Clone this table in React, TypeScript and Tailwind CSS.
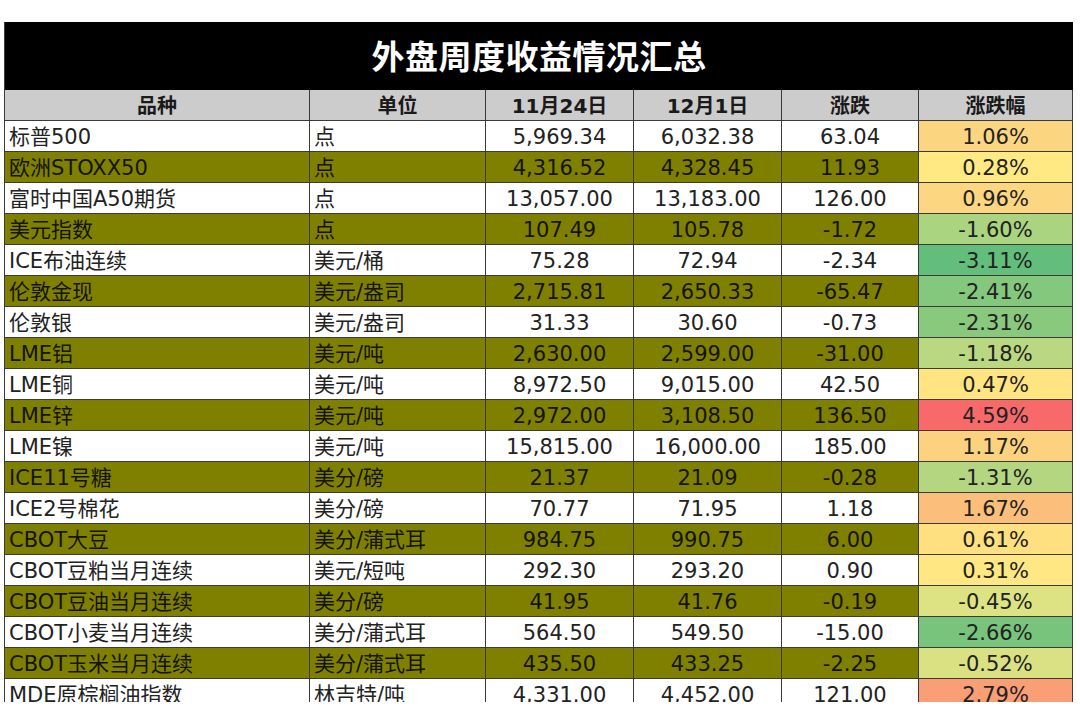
import React from 'react';

interface Row {
    name: string;
    unit: string;
    prev: string;
    curr: string;
    change: string;
    pct: string;
    pctBg: string;
}

const rows: Row[] = [
    { name: '标普500', unit: '点', prev: '5,969.34', curr: '6,032.38', change: '63.04', pct: '1.06%', pctBg: 'bg-[#fcd580]' },
    { name: '欧洲STOXX50', unit: '点', prev: '4,316.52', curr: '4,328.45', change: '11.93', pct: '0.28%', pctBg: 'bg-[#fee983]' },
    { name: '富时中国A50期货', unit: '点', prev: '13,057.00', curr: '13,183.00', change: '126.00', pct: '0.96%', pctBg: 'bg-[#fcd680]' },
    { name: '美元指数', unit: '点', prev: '107.49', curr: '105.78', change: '-1.72', pct: '-1.60%', pctBg: 'bg-[#aad480]' },
    { name: 'ICE布油连续', unit: '美元/桶', prev: '75.28', curr: '72.94', change: '-2.34', pct: '-3.11%', pctBg: 'bg-[#63be7b]' },
    { name: '伦敦金现', unit: '美元/盎司', prev: '2,715.81', curr: '2,650.33', change: '-65.47', pct: '-2.41%', pctBg: 'bg-[#84c87e]' },
    { name: '伦敦银', unit: '美元/盎司', prev: '31.33', curr: '30.60', change: '-0.73', pct: '-2.31%', pctBg: 'bg-[#88c97e]' },
    { name: 'LME铝', unit: '美元/吨', prev: '2,630.00', curr: '2,599.00', change: '-31.00', pct: '-1.18%', pctBg: 'bg-[#bad881]' },
    { name: 'LME铜', unit: '美元/吨', prev: '8,972.50', curr: '9,015.00', change: '42.50', pct: '0.47%', pctBg: 'bg-[#fee582]' },
    { name: 'LME锌', unit: '美元/吨', prev: '2,972.00', curr: '3,108.50', change: '136.50', pct: '4.59%', pctBg: 'bg-[#f8696b]' },
    { name: 'LME镍', unit: '美元/吨', prev: '15,815.00', curr: '16,000.00', change: '185.00', pct: '1.17%', pctBg: 'bg-[#fcd27f]' },
    { name: 'ICE11号糖', unit: '美分/磅', prev: '21.37', curr: '21.09', change: '-0.28', pct: '-1.31%', pctBg: 'bg-[#b5d680]' },
    { name: 'ICE2号棉花', unit: '美分/磅', prev: '70.77', curr: '71.95', change: '1.18', pct: '1.67%', pctBg: 'bg-[#fbbf7b]' },
    { name: 'CBOT大豆', unit: '美分/蒲式耳', prev: '984.75', curr: '990.75', change: '6.00', pct: '0.61%', pctBg: 'bg-[#fee081]' },
    { name: 'CBOT豆粕当月连续', unit: '美元/短吨', prev: '292.30', curr: '293.20', change: '0.90', pct: '0.31%', pctBg: 'bg-[#ffe884]' },
    { name: 'CBOT豆油当月连续', unit: '美分/磅', prev: '41.95', curr: '41.76', change: '-0.19', pct: '-0.45%', pctBg: 'bg-[#dde283]' },
    { name: 'CBOT小麦当月连续', unit: '美分/蒲式耳', prev: '564.50', curr: '549.50', change: '-15.00', pct: '-2.66%', pctBg: 'bg-[#78c47d]' },
    { name: 'CBOT玉米当月连续', unit: '美分/蒲式耳', prev: '435.50', curr: '433.25', change: '-2.25', pct: '-0.52%', pctBg: 'bg-[#dae183]' },
    { name: 'MDE原棕榈油指数', unit: '林吉特/吨', prev: '4,331.00', curr: '4,452.00', change: '121.00', pct: '2.79%', pctBg: 'bg-[#f99e75]' },
];

const headers = ['品种', '单位', '11月24日', '12月1日', '涨跌', '涨跌幅'];

const gridCols = 'grid grid-cols-[305px_176px_148px_148px_137px_154px]';
const cellBase = 'h-[31px] flex items-center border-r border-b border-[#3a3a3a] overflow-hidden whitespace-nowrap';

export default function App() {
    return (
        <div className="w-[1080px] h-[720px] bg-white font-['DejaVu_Sans','Noto_Sans_CJK_SC',sans-serif]">
            <div className="pt-[22px] pl-[4px]">
                <div className="w-[1069px] h-[680px] overflow-hidden border-l border-[#3a3a3a]">
                    <div className="h-[68px] bg-black flex items-center justify-center">
                        <span className="text-white text-[33px] font-bold font-['Noto_Sans_CJK_SC',sans-serif] tracking-[0.5px]">
                            外盘周度收益情况汇总
                        </span>
                    </div>

                    <div className={gridCols}>
                        {headers.map((h) => (
                            <div key={h} className={`${cellBase} justify-center bg-[#cccccc] text-[20px] font-bold text-[#1a1a1a] pt-[2px]`}>
                                {h}
                            </div>
                        ))}
                    </div>

                    {rows.map((r, i) => {
                        const olive = i % 2 === 1;
                        const rowBg = olive ? 'bg-[#808000] text-[#141400]' : 'bg-white text-[#222222]';
                        return (
                            <div key={r.name} className={`${gridCols} text-[21px]`}>
                                <div className={`${cellBase} ${rowBg} pl-[4px] pt-[3px]`}>{r.name}</div>
                                <div className={`${cellBase} ${rowBg} pl-[4px] pt-[3px]`}>{r.unit}</div>
                                <div className={`${cellBase} ${rowBg} justify-center pt-[3px]`}>{r.prev}</div>
                                <div className={`${cellBase} ${rowBg} justify-center pt-[3px]`}>{r.curr}</div>
                                <div className={`${cellBase} ${rowBg} justify-center pt-[3px]`}>{r.change}</div>
                                <div className={`${cellBase} ${r.pctBg} text-[#222222] justify-center pt-[3px]`}>{r.pct}</div>
                            </div>
                        );
                    })}
                </div>
            </div>
        </div>
    );
}
